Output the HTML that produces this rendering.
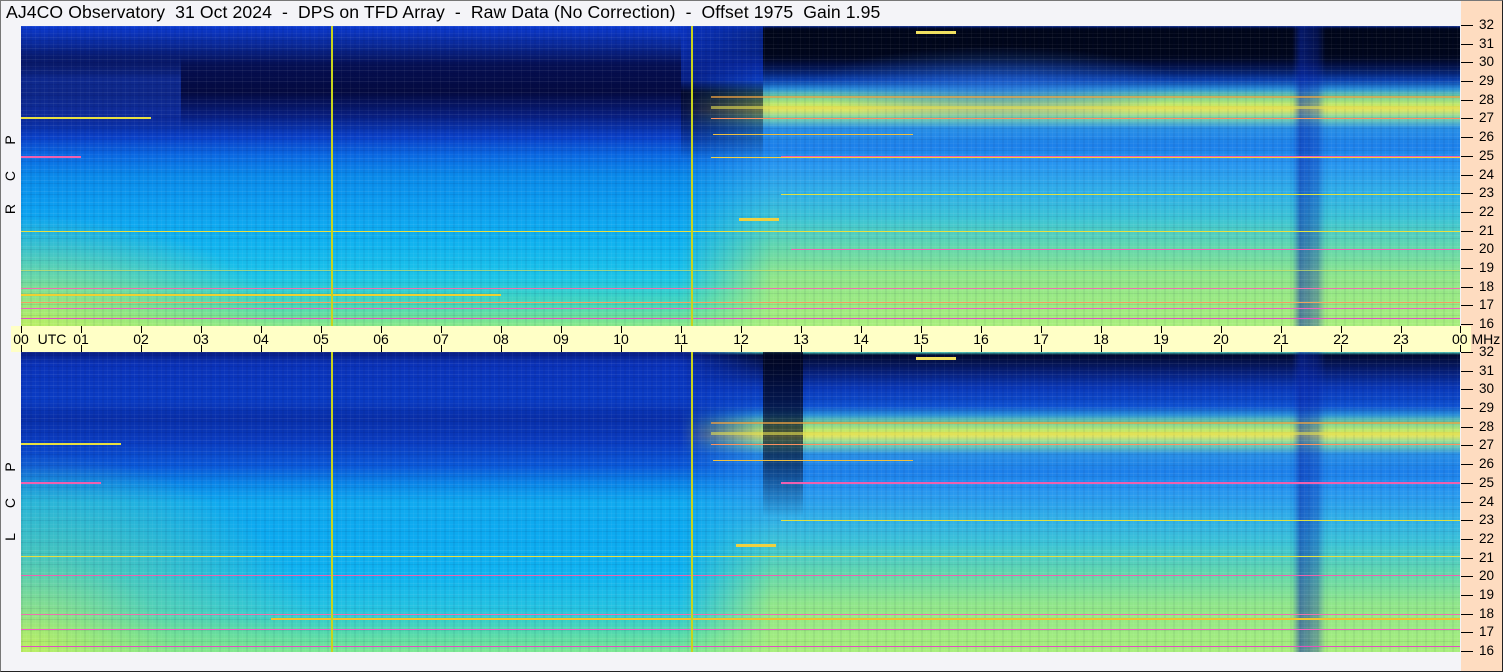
<!DOCTYPE html>
<html><head><meta charset="utf-8"><style>
*{margin:0;padding:0;box-sizing:border-box}
body{width:1503px;height:672px;background:#f4f4f8;position:relative;overflow:hidden;font-family:"Liberation Sans",sans-serif;color:#000}
.title{position:absolute;left:6px;top:2px;font-size:17.6px;white-space:pre;letter-spacing:0.1px}
.peach{position:absolute;left:1461px;top:0;width:41px;height:672px;background:#fedcc0}
.frame{position:absolute;left:0;top:0;width:1503px;height:672px;border:1px solid #777;border-right:1px solid #222;border-bottom:1px solid #222;pointer-events:none}
.band{position:absolute;left:11px;top:326px;width:1460px;height:26px;background:#ffffc6}
.panel{position:absolute;left:21px;width:1439px;height:300px;overflow:hidden}
.panel>div{position:absolute;top:0;height:300px}
.tex{left:0;width:1439px;background:repeating-linear-gradient(to bottom,rgba(255,255,255,.07) 0 1px,transparent 1px 3px,rgba(0,0,40,.07) 3px 4px,transparent 4px 7px,rgba(255,255,255,.04) 7px 8px,transparent 8px 11px)}
.vtex{left:0;width:1439px;background:repeating-linear-gradient(to right,rgba(0,0,60,.05) 0 2px,transparent 2px 5px,rgba(255,255,255,.04) 5px 6px,transparent 6px 9px)}
i{position:absolute;height:2px;display:block}
.vl{position:absolute;width:2px;background:#c8d41c}
.fl{position:absolute;left:1461px;width:12px;height:1px;background:#000}
.ft{position:absolute;left:1479px;font-size:13.5px;line-height:14px}
.side{position:absolute;left:2px;width:16px;font-size:14px;transform:rotate(-90deg);white-space:pre;text-align:center}
.tt{position:absolute;width:1px;height:7px;background:#000}
.tl{position:absolute;top:331px;font-size:14px;line-height:16px;transform:translateX(-50%);white-space:nowrap}
.mask{-webkit-mask-image:linear-gradient(to right,transparent 0,#000 90px,#000 100%);mask-image:linear-gradient(to right,transparent 0,#000 90px,#000 100%)}
</style></head><body>
<div class="title">AJ4CO Observatory  31 Oct 2024  -  DPS on TFD Array  -  Raw Data (No Correction)  -  Offset 1975  Gain 1.95</div>
<div class="peach"></div>
<div class="band"></div>

<!-- TOP PANEL -->
<div class="panel" style="top:26px">
 <div style="left:0;width:760px;background:linear-gradient(to bottom,#0c3ad0 0%,#0a2a9a 6%,#050f52 13%,#040a40 22%,#081e80 30%,#0a40c8 37%,#0a68e2 43%,#0a8aea 50%,#0c9ef0 60%,#10b2f0 72%,#1cc4e8 84%,#48d8b8 93%,#88e888 100%)"></div>
 <div style="left:0;width:160px;background:linear-gradient(to bottom,transparent 10%,rgba(20,60,190,.6) 18%,rgba(20,60,190,.5) 28%,transparent 36%)"></div>
 <div style="left:0;width:260px;background:radial-gradient(ellipse 260px 110px at 0 300px,rgba(200,240,90,.8),rgba(200,240,90,0))"></div>
 <div class="mask" style="left:660px;width:779px;background:linear-gradient(to bottom,#0a2a9a 0%,#000818 2%,#000a28 9%,#062080 13%,#0e50d0 18%,#2a90d8 21%,#70d0a0 23.5%,#c0e868 26%,#e0e460 28%,#80d8a8 30.5%,#2a90e6 34%,#1c80ea 40%,#2896f0 46%,#30aee8 55%,#3cc4d6 64%,#60d6b0 73%,#90e68a 84%,#a8ee7c 100%)"></div>
 <div style="left:660px;width:82px;background:linear-gradient(to bottom,rgba(10,50,190,.7) 0%,rgba(10,50,190,.5) 18%,rgba(0,5,30,.6) 22%,rgba(0,5,30,.3) 35%,transparent 45%)"></div>
 <div style="left:742px;width:697px;background:linear-gradient(to bottom,transparent 0,rgba(0,5,25,.9) 1%,rgba(0,5,25,.85) 10%,rgba(0,10,50,.3) 17%,transparent 21%)"></div>
 <div style="left:790px;width:370px;background:radial-gradient(ellipse 185px 40px at 185px 60px,rgba(40,110,220,.6),rgba(40,110,220,0))"></div>
 <div style="left:1271px;width:34px;background:linear-gradient(to right,transparent,rgba(10,40,170,.55) 25%,rgba(10,40,170,.35) 75%,transparent)"></div>
 <div class="tex"></div><div class="vtex"></div>
 <i style="top:5px;left:895px;width:40px;background:#f0e060;height:3px"></i>
 <i style="top:70px;left:690px;width:749px;background:#f0a040;height:2px;opacity:.7"></i>
 <i style="top:80px;left:690px;width:749px;background:#e8e050;height:3px;opacity:.6"></i>
 <i style="top:91px;left:0;width:130px;background:#e8e040"></i>
 <i style="top:92px;left:690px;width:749px;background:#ff9060;height:1px"></i>
 <i style="top:108px;left:692px;width:200px;background:#f0c040;height:1px"></i>
 <i style="top:130px;left:0;width:60px;background:#f060b0"></i>
 <i style="top:130px;left:760px;width:679px;background:#f060b0"></i>
 <i style="top:131px;left:690px;width:749px;background:#f0d040;height:1px"></i>
 <i style="top:168px;left:760px;width:679px;background:#e0e040;height:1px"></i>
 <i style="top:192px;left:718px;width:40px;background:#f0d040;height:3px"></i>
 <i style="top:205px;left:0;width:1439px;background:#e8e040;height:1px"></i>
 <i style="top:223px;left:770px;width:669px;background:#f060b0;height:1px"></i>
 <i style="top:244px;left:0;width:1439px;background:#d0e060;height:1px;opacity:.7"></i>
 <i style="top:262px;left:0;width:1439px;background:#f070b0;height:1px"></i>
 <i style="top:268px;left:0;width:480px;background:#f0d030"></i>
 <i style="top:276px;left:0;width:1439px;background:#f0a060;height:1px"></i>
 <i style="top:282px;left:0;width:1439px;background:#f060c0;height:1px"></i>
 <i style="top:292px;left:0;width:1439px;background:#e050c0;height:1px"></i>
 <div class="vl" style="left:310px;top:0"></div>
 <div class="vl" style="left:670px;top:0"></div>
</div>

<!-- BOTTOM PANEL -->
<div class="panel" style="top:352px">
 <div style="left:0;width:760px;background:linear-gradient(to bottom,#081c80 0%,#0a32b8 4%,#0a3cc4 16%,#082ea8 22%,#0a3cc0 30%,#0a58d8 38%,#0a86e8 44%,#10aaf0 50%,#0caaf0 62%,#10b4f0 75%,#26c4e0 86%,#50d8b0 93%,#7ce894 100%)"></div>
 <div style="left:0;width:300px;background:radial-gradient(ellipse 300px 200px at 0 300px,rgba(200,240,90,.85),rgba(150,230,120,.4) 50%,rgba(150,230,120,0))"></div>
 <div class="mask" style="left:660px;width:779px;background:linear-gradient(to bottom,#4ad0c0 0%,#020a30 1%,#061c70 6%,#0a38b8 12%,#0e50d0 18%,#2a90d8 21%,#70d0a0 23.5%,#c0e868 26%,#e0e460 28%,#80d8a8 30.5%,#2a90e6 34%,#1c80ea 40%,#2896f0 46%,#30aee8 55%,#3cc4d6 64%,#60d6b0 73%,#90e68a 84%,#a8ee7c 100%)"></div>
 <div style="left:742px;width:40px;background:linear-gradient(to bottom,rgba(0,5,30,.85) 0%,rgba(0,5,30,.6) 35%,transparent 55%)"></div>
 <div style="left:1271px;width:34px;background:linear-gradient(to right,transparent,rgba(10,40,170,.55) 25%,rgba(10,40,170,.35) 75%,transparent)"></div>
 <div class="tex"></div><div class="vtex"></div>
 <i style="top:5px;left:895px;width:40px;background:#f0e060;height:3px"></i>
 <i style="top:70px;left:690px;width:749px;background:#f0a040;height:2px;opacity:.7"></i>
 <i style="top:80px;left:690px;width:749px;background:#e8e050;height:3px;opacity:.6"></i>
 <i style="top:91px;left:0;width:100px;background:#e8e040"></i>
 <i style="top:92px;left:690px;width:749px;background:#ff9060;height:1px"></i>
 <i style="top:108px;left:692px;width:200px;background:#f0c040;height:1px"></i>
 <i style="top:130px;left:0;width:80px;background:#f060b0"></i>
 <i style="top:130px;left:760px;width:679px;background:#f060b0"></i>
 <i style="top:168px;left:760px;width:679px;background:#e0e040;height:1px"></i>
 <i style="top:192px;left:715px;width:40px;background:#f0d040;height:3px"></i>
 <i style="top:204px;left:0;width:1439px;background:#e8e040;height:1px"></i>
 <i style="top:223px;left:0;width:1439px;background:#f060b0;height:1px"></i>
 <i style="top:262px;left:0;width:1439px;background:#f070b0;height:1px"></i>
 <i style="top:266px;left:250px;width:1189px;background:#f0c030"></i>
 <i style="top:277px;left:0;width:1439px;background:#f060c0;height:1px"></i>
 <i style="top:294px;left:0;width:1439px;background:#e050c0;height:1px"></i>
 <div class="vl" style="left:310px;top:0"></div>
 <div class="vl" style="left:670px;top:0"></div>
</div>

<div class="side" style="top:132px">P</div>
<div class="side" style="top:168px">C</div>
<div class="side" style="top:201px">R</div>
<div class="side" style="top:459px">P</div>
<div class="side" style="top:495px">C</div>
<div class="side" style="top:529px">L</div>

<!-- time axis -->
<div class="tt" style="left:21px;top:326px"></div><div class="tt" style="left:21px;top:345px"></div>
<div class="tt" style="left:81px;top:326px"></div><div class="tt" style="left:81px;top:345px"></div>
<div class="tt" style="left:141px;top:326px"></div><div class="tt" style="left:141px;top:345px"></div>
<div class="tt" style="left:201px;top:326px"></div><div class="tt" style="left:201px;top:345px"></div>
<div class="tt" style="left:261px;top:326px"></div><div class="tt" style="left:261px;top:345px"></div>
<div class="tt" style="left:321px;top:326px"></div><div class="tt" style="left:321px;top:345px"></div>
<div class="tt" style="left:381px;top:326px"></div><div class="tt" style="left:381px;top:345px"></div>
<div class="tt" style="left:441px;top:326px"></div><div class="tt" style="left:441px;top:345px"></div>
<div class="tt" style="left:501px;top:326px"></div><div class="tt" style="left:501px;top:345px"></div>
<div class="tt" style="left:561px;top:326px"></div><div class="tt" style="left:561px;top:345px"></div>
<div class="tt" style="left:621px;top:326px"></div><div class="tt" style="left:621px;top:345px"></div>
<div class="tt" style="left:681px;top:326px"></div><div class="tt" style="left:681px;top:345px"></div>
<div class="tt" style="left:741px;top:326px"></div><div class="tt" style="left:741px;top:345px"></div>
<div class="tt" style="left:801px;top:326px"></div><div class="tt" style="left:801px;top:345px"></div>
<div class="tt" style="left:861px;top:326px"></div><div class="tt" style="left:861px;top:345px"></div>
<div class="tt" style="left:921px;top:326px"></div><div class="tt" style="left:921px;top:345px"></div>
<div class="tt" style="left:981px;top:326px"></div><div class="tt" style="left:981px;top:345px"></div>
<div class="tt" style="left:1041px;top:326px"></div><div class="tt" style="left:1041px;top:345px"></div>
<div class="tt" style="left:1101px;top:326px"></div><div class="tt" style="left:1101px;top:345px"></div>
<div class="tt" style="left:1161px;top:326px"></div><div class="tt" style="left:1161px;top:345px"></div>
<div class="tt" style="left:1221px;top:326px"></div><div class="tt" style="left:1221px;top:345px"></div>
<div class="tt" style="left:1281px;top:326px"></div><div class="tt" style="left:1281px;top:345px"></div>
<div class="tt" style="left:1341px;top:326px"></div><div class="tt" style="left:1341px;top:345px"></div>
<div class="tt" style="left:1401px;top:326px"></div><div class="tt" style="left:1401px;top:345px"></div>
<div class="tt" style="left:1460px;top:326px"></div><div class="tt" style="left:1460px;top:345px"></div>
<div class="tl" style="left:21px">00</div>
<div class="tl" style="left:52px">UTC</div>
<div class="tl" style="left:81px">01</div><div class="tl" style="left:141px">02</div><div class="tl" style="left:201px">03</div>
<div class="tl" style="left:261px">04</div><div class="tl" style="left:321px">05</div><div class="tl" style="left:381px">06</div>
<div class="tl" style="left:441px">07</div><div class="tl" style="left:501px">08</div><div class="tl" style="left:561px">09</div>
<div class="tl" style="left:621px">10</div><div class="tl" style="left:681px">11</div><div class="tl" style="left:741px">12</div>
<div class="tl" style="left:801px">13</div><div class="tl" style="left:861px">14</div><div class="tl" style="left:921px">15</div>
<div class="tl" style="left:981px">16</div><div class="tl" style="left:1041px">17</div><div class="tl" style="left:1101px">18</div>
<div class="tl" style="left:1161px">19</div><div class="tl" style="left:1221px">20</div><div class="tl" style="left:1281px">21</div>
<div class="tl" style="left:1341px">22</div><div class="tl" style="left:1401px">23</div>
<div class="tl" style="left:1452px;transform:none">00 MHz</div>

<!-- freq axis top -->
<div class="fl" style="top:25px"></div><div class="ft" style="top:18px">32</div>
<div class="fl" style="top:44px"></div><div class="ft" style="top:37px">31</div>
<div class="fl" style="top:62px"></div><div class="ft" style="top:55px">30</div>
<div class="fl" style="top:81px"></div><div class="ft" style="top:74px">29</div>
<div class="fl" style="top:100px"></div><div class="ft" style="top:93px">28</div>
<div class="fl" style="top:118px"></div><div class="ft" style="top:111px">27</div>
<div class="fl" style="top:137px"></div><div class="ft" style="top:130px">26</div>
<div class="fl" style="top:156px"></div><div class="ft" style="top:149px">25</div>
<div class="fl" style="top:175px"></div><div class="ft" style="top:168px">24</div>
<div class="fl" style="top:193px"></div><div class="ft" style="top:186px">23</div>
<div class="fl" style="top:212px"></div><div class="ft" style="top:205px">22</div>
<div class="fl" style="top:231px"></div><div class="ft" style="top:224px">21</div>
<div class="fl" style="top:249px"></div><div class="ft" style="top:242px">20</div>
<div class="fl" style="top:268px"></div><div class="ft" style="top:261px">19</div>
<div class="fl" style="top:287px"></div><div class="ft" style="top:280px">18</div>
<div class="fl" style="top:305px"></div><div class="ft" style="top:298px">17</div>
<div class="fl" style="top:324px"></div><div class="ft" style="top:317px">16</div>
<!-- bottom -->
<div class="fl" style="top:352px"></div><div class="ft" style="top:345px">32</div>
<div class="fl" style="top:371px"></div><div class="ft" style="top:364px">31</div>
<div class="fl" style="top:389px"></div><div class="ft" style="top:382px">30</div>
<div class="fl" style="top:408px"></div><div class="ft" style="top:401px">29</div>
<div class="fl" style="top:427px"></div><div class="ft" style="top:420px">28</div>
<div class="fl" style="top:445px"></div><div class="ft" style="top:438px">27</div>
<div class="fl" style="top:464px"></div><div class="ft" style="top:457px">26</div>
<div class="fl" style="top:483px"></div><div class="ft" style="top:476px">25</div>
<div class="fl" style="top:502px"></div><div class="ft" style="top:495px">24</div>
<div class="fl" style="top:520px"></div><div class="ft" style="top:513px">23</div>
<div class="fl" style="top:539px"></div><div class="ft" style="top:532px">22</div>
<div class="fl" style="top:558px"></div><div class="ft" style="top:551px">21</div>
<div class="fl" style="top:576px"></div><div class="ft" style="top:569px">20</div>
<div class="fl" style="top:595px"></div><div class="ft" style="top:588px">19</div>
<div class="fl" style="top:614px"></div><div class="ft" style="top:607px">18</div>
<div class="fl" style="top:632px"></div><div class="ft" style="top:625px">17</div>
<div class="fl" style="top:651px"></div><div class="ft" style="top:644px">16</div>
<div class="frame"></div>
</body></html>
